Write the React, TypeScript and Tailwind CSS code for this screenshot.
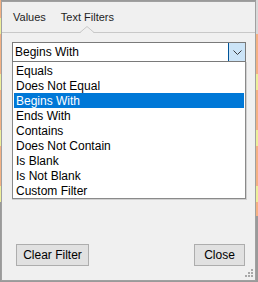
import React from "react";

const options = [
  "Equals",
  "Does Not Equal",
  "Begins With",
  "Ends With",
  "Contains",
  "Does Not Contain",
  "Is Blank",
  "Is Not Blank",
  "Custom Filter",
];

const selected = "Begins With";

const font = { fontFamily: '"Liberation Sans", Arial, sans-serif' };

const App = () => (
  <div
    className="relative w-[258px] h-[282px] overflow-hidden bg-[#9a9a9a] text-[12px] text-black"
    style={font}
  >
    {/* background sheet peeking out at the edges */}
    <div className="absolute left-0 top-0 w-[1px] h-[282px] flex flex-col">
      <div className="h-[18px] bg-[#f4b183]" />
      <div className="h-[16px] bg-[#eeee99]" />
      <div className="h-[40px] bg-[#f4b183]" />
      <div className="h-[16px] bg-[#eeee99]" />
      <div className="h-[40px] bg-[#f4b183]" />
      <div className="h-[16px] bg-[#eeee99]" />
      <div className="h-[40px] bg-[#f4b183]" />
      <div className="h-[16px] bg-[#eeee99]" />
      <div className="flex-1 bg-[#9a9a9a]" />
    </div>
    <div className="absolute right-0 top-0 w-[2px] h-[282px] flex flex-col">
      <div className="h-[34px] bg-[#d9d9d9]" />
      <div className="h-[40px] bg-[#f4b183]" />
      <div className="h-[16px] bg-[#eeee99]" />
      <div className="h-[40px] bg-[#f4b183]" />
      <div className="h-[16px] bg-[#eeee99]" />
      <div className="h-[40px] bg-[#f4b183]" />
      <div className="h-[16px] bg-[#eeee99]" />
      <div className="h-[14px] bg-[#f4b183]" />
      <div className="flex-1 bg-[#9a9a9a]" />
    </div>

    {/* popup */}
    <div className="absolute left-[1px] top-[1px] w-[255px] h-[280px] border border-[#a0a0a0] bg-[#f0f0f0] flex flex-col">
      {/* tabs */}
      <div className="relative h-[31px] flex items-center gap-[15px] pl-[11px] pt-[1px] text-[11px] text-[#1e1e1e] border-b border-[#c8c8c8]">
        <span>Values</span>
        <span>Text Filters</span>
        <svg
          className="absolute left-[78px] bottom-[-1px]"
          width="14"
          height="7"
          viewBox="0 0 14 7"
        >
          <polygon points="0,7 7,1 14,7" fill="#f0f0f0" />
          <polyline points="0,6.5 7,0.5 14,6.5" fill="none" stroke="#c8c8c8" strokeWidth="1" />
        </svg>
      </div>

      <div className="flex flex-col pl-[10px] pt-[9px]">
        {/* combo box */}
        <div className="flex w-[234px] h-[20px] border border-[#7a7a7a] bg-white">
          <div className="flex-1 flex items-center pl-[2px]">Begins With</div>
          <div className="w-[17px] flex items-center justify-center bg-[#cce4f7] border-l border-[#005499]">
            <svg width="9" height="5" viewBox="0 0 9 5">
              <polyline points="0.5,0.5 4.5,4.5 8.5,0.5" fill="none" stroke="#3c3c3c" strokeWidth="1" />
            </svg>
          </div>
        </div>

        {/* dropdown list */}
        <div className="w-[235px] pr-[1px] pb-[1px] bg-[#d0d0d0]">
          <div className="w-[234px] bg-white border-x border-b border-[#8a8a8a] px-[1px] pt-[1px] flex flex-col">
            {options.map((o) => (
              <div
                key={o}
                className={
                  o === selected
                    ? "h-[15px] flex items-center pl-[2px] pt-[1px] bg-[#0078d7] text-white"
                    : "h-[15px] flex items-center pl-[2px] pt-[1px]"
                }
              >
                {o}
              </div>
            ))}
          </div>
        </div>
      </div>

      <div className="flex-1" />

      {/* buttons */}
      <div className="flex justify-between pl-[14px] pr-[10px] pb-[14px]">
        <button className="w-[73px] h-[22px] border border-[#adadad] bg-[#e1e1e1] text-black">
          Clear Filter
        </button>
        <button className="w-[51px] h-[22px] border border-[#adadad] bg-[#e1e1e1] text-black">
          Close
        </button>
      </div>

      {/* resize grip */}
      <svg className="absolute right-[2px] bottom-[3px]" width="8" height="8" viewBox="0 0 8 8">
        <rect x="6" y="0" width="2" height="2" fill="#a8a8a8" />
        <rect x="3" y="3" width="2" height="2" fill="#a8a8a8" />
        <rect x="6" y="3" width="2" height="2" fill="#a8a8a8" />
        <rect x="0" y="6" width="2" height="2" fill="#a8a8a8" />
        <rect x="3" y="6" width="2" height="2" fill="#a8a8a8" />
        <rect x="6" y="6" width="2" height="2" fill="#a8a8a8" />
      </svg>
    </div>
  </div>
);

export default App;
